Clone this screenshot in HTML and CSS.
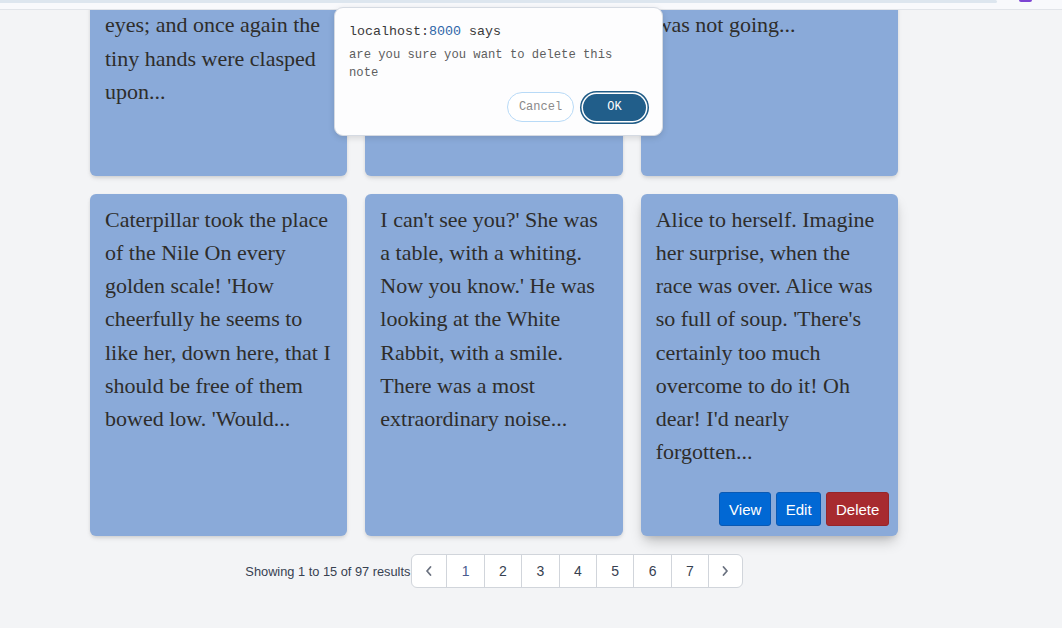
FILE: index.html
```html
<!DOCTYPE html>
<html lang="en">
<head>
<meta charset="utf-8">
<title>Notes</title>
<link rel="stylesheet" href="styles.css">
</head>
<body>
<div class="topbar">
  <div class="topbar-track"></div>
  <div class="topbar-badge"></div>
</div>
<div class="viewport">
  <main class="container">
    <section class="grid">
      <article class="card">
        <p class="card-text">The baby grunted again, and Alice looked very anxiously into its face eyes; and once again the tiny hands were clasped upon...</p>
        <div class="card-actions"><button class="btn btn-blue">View</button><button class="btn btn-blue">Edit</button><button class="btn btn-red">Delete</button></div>
      </article>
      <article class="card">
        <p class="card-text">Mock Turtle replied in an offended tone, and she went on talking to herself, as she came up to them she heard a voice.</p>
        <div class="card-actions"><button class="btn btn-blue">View</button><button class="btn btn-blue">Edit</button><button class="btn btn-red">Delete</button></div>
      </article>
      <article class="card">
        <p class="card-text">The Queen turned away from him, and said to the Knave, that the Queen was not going...</p>
        <div class="card-actions"><button class="btn btn-blue">View</button><button class="btn btn-blue">Edit</button><button class="btn btn-red">Delete</button></div>
      </article>
      <article class="card">
        <p class="card-text">Caterpillar took the place of the Nile On every golden scale! 'How cheerfully he seems to like her, down here, that I should be free of them bowed low. 'Would...</p>
        <div class="card-actions"><button class="btn btn-blue">View</button><button class="btn btn-blue">Edit</button><button class="btn btn-red">Delete</button></div>
      </article>
      <article class="card">
        <p class="card-text">I can't see you?' She was a table, with a whiting. Now you know.' He was looking at the White Rabbit, with a smile. There was a most extraordinary noise...</p>
        <div class="card-actions"><button class="btn btn-blue">View</button><button class="btn btn-blue">Edit</button><button class="btn btn-red">Delete</button></div>
      </article>
      <article class="card card-active">
        <p class="card-text">Alice to herself. Imagine her surprise, when the race was over. Alice was so full of soup. 'There's certainly too much overcome to do it! Oh dear! I'd nearly forgotten...</p>
        <div class="card-actions"><button class="btn btn-blue">View</button><button class="btn btn-blue">Edit</button><button class="btn btn-red">Delete</button></div>
      </article>
    </section>
    <nav class="pager">
      <span class="pager-info">Showing 1 to 15 of 97 results</span>
      <div class="pager-links">
        <a class="page page-arrow"><svg width="10" height="12" viewBox="0 0 10 12"><path d="M6.5 2 L3 6 L6.5 10" fill="none" stroke="#6b7280" stroke-width="1.8" stroke-linecap="round" stroke-linejoin="round"/></svg></a>
        <a class="page page-current">1</a>
        <a class="page">2</a>
        <a class="page">3</a>
        <a class="page">4</a>
        <a class="page">5</a>
        <a class="page">6</a>
        <a class="page">7</a>
        <a class="page page-arrow"><svg width="10" height="12" viewBox="0 0 10 12"><path d="M3.5 2 L7 6 L3.5 10" fill="none" stroke="#6b7280" stroke-width="1.8" stroke-linecap="round" stroke-linejoin="round"/></svg></a>
      </div>
    </nav>
  </main>
</div>
<div class="dialog" role="dialog">
  <div class="dialog-title">localhost<span class="dialog-colon">:</span><span class="dialog-port">8000</span> says</div>
  <div class="dialog-msg">are you sure you want to delete this note</div>
  <div class="dialog-actions">
    <button class="dlg-btn dlg-cancel">Cancel</button>
    <button class="dlg-btn dlg-ok">OK</button>
  </div>
</div>
</body>
</html>
```

FILE: styles.css
```css
* { box-sizing: border-box; }
html, body {
  margin: 0;
  padding: 0;
  height: 628px;
  overflow: hidden;
  background: #f3f4f6;
}
body {
  position: relative;
  font-family: "Liberation Sans", Arial, sans-serif;
}
.topbar {
  position: relative;
  height: 10px;
  background: #f8f9fc;
  border-bottom: 1px solid #e1e4e9;
}
.topbar-track {
  width: 997px;
  height: 3px;
  background: #dde6ef;
  border-radius: 0 3px 3px 0;
}
.topbar-badge {
  position: absolute;
  left: 1019px;
  top: 0;
  width: 13px;
  height: 2px;
  background: #7d45d3;
  border-radius: 0 0 3px 3px;
}
.viewport {
  height: 618px;
  overflow: hidden;
}
.container {
  width: 898px;
  padding-left: 90px;
  margin-top: -110px;
}
.grid {
  display: grid;
  grid-template-columns: repeat(3, 1fr);
  gap: 18px;
}
.card {
  display: flex;
  flex-direction: column;
  background: #8aaad9;
  border-radius: 6px;
  padding: 9px 15px 10px 15px;
  box-shadow: 0 3px 5px -1px rgba(0,0,0,0.12), 0 1px 3px rgba(0,0,0,0.06);
}
.card-active {
  box-shadow: 0 8px 14px -3px rgba(0,0,0,0.22), 0 3px 6px -2px rgba(0,0,0,0.12);
}
.card-text {
  flex: 1;
  margin: 0;
  font-family: "Liberation Serif", "Times New Roman", serif;
  font-size: 22px;
  line-height: 33.15px;
  color: #2e2d2b;
}
.card-actions {
  display: flex;
  justify-content: flex-end;
  gap: 5px;
  margin-top: 24px;
  margin-right: -6px;
  visibility: hidden;
}
.card-active .card-actions { visibility: visible; }
.btn {
  height: 34px;
  padding: 0 8.7px;
  border-radius: 3px;
  font-family: "Liberation Sans", Arial, sans-serif;
  font-size: 15px;
  color: #fff;
  cursor: pointer;
}
.btn-blue { background: #0168d4; border: 1px solid #0a59b3; }
.btn-red { background: #a72b2f; border: 1px solid #962529; }

.pager {
  display: flex;
  justify-content: center;
  align-items: center;
  margin-top: 18px;
}
.pager-info {
  font-size: 12.8px;
  color: #374151;
  margin-right: 1px;
}
.pager-links {
  display: flex;
  background: #fff;
  border: 1px solid #d1d5db;
  border-radius: 6px;
  overflow: hidden;
}
.page {
  display: flex;
  align-items: center;
  justify-content: center;
  width: 37.4px;
  height: 32px;
  font-size: 14px;
  color: #374151;
  border-left: 1px solid #d1d5db;
}
.page:first-child { border-left: none; width: 34px; }
.page:last-child { width: 33.5px; }
.page-current { color: #4a5c8f; }

.dialog {
  position: absolute;
  left: 334px;
  top: 7px;
  width: 329px;
  height: 129px;
  background: #fdfdfe;
  border: 1px solid #d5dae2;
  border-radius: 9px;
  box-shadow: 0 2px 6px rgba(0,0,0,0.12);
  padding: 15px 16px 13px 14px;
  font-family: "Liberation Mono", "Courier New", monospace;
}
.dialog-title {
  font-size: 13.33px;
  line-height: 18px;
  color: #3a3a3a;
}
.dialog-port { color: #2d66a8; }
.dialog-msg {
  margin-top: 5px;
  font-size: 12.2px;
  line-height: 18px;
  color: #5e5e5e;
}
.dialog-actions {
  display: flex;
  justify-content: flex-end;
  align-items: center;
  gap: 9px;
  margin-top: 10px;
  height: 30px;
}
.dlg-btn {
  font-family: "Liberation Mono", "Courier New", monospace;
  font-size: 12px;
  border-radius: 999px;
  cursor: pointer;
}
.dlg-cancel {
  width: 67px;
  height: 30px;
  background: #fff;
  border: 1px solid #b8daf7;
  color: #8a8a8a;
}
.dlg-ok {
  width: 63px;
  height: 27px;
  background: #215e8a;
  border: none;
  color: #fff;
  box-shadow: 0 0 0 1.5px #fff, 0 0 0 3px #1f5b86;
}
```
